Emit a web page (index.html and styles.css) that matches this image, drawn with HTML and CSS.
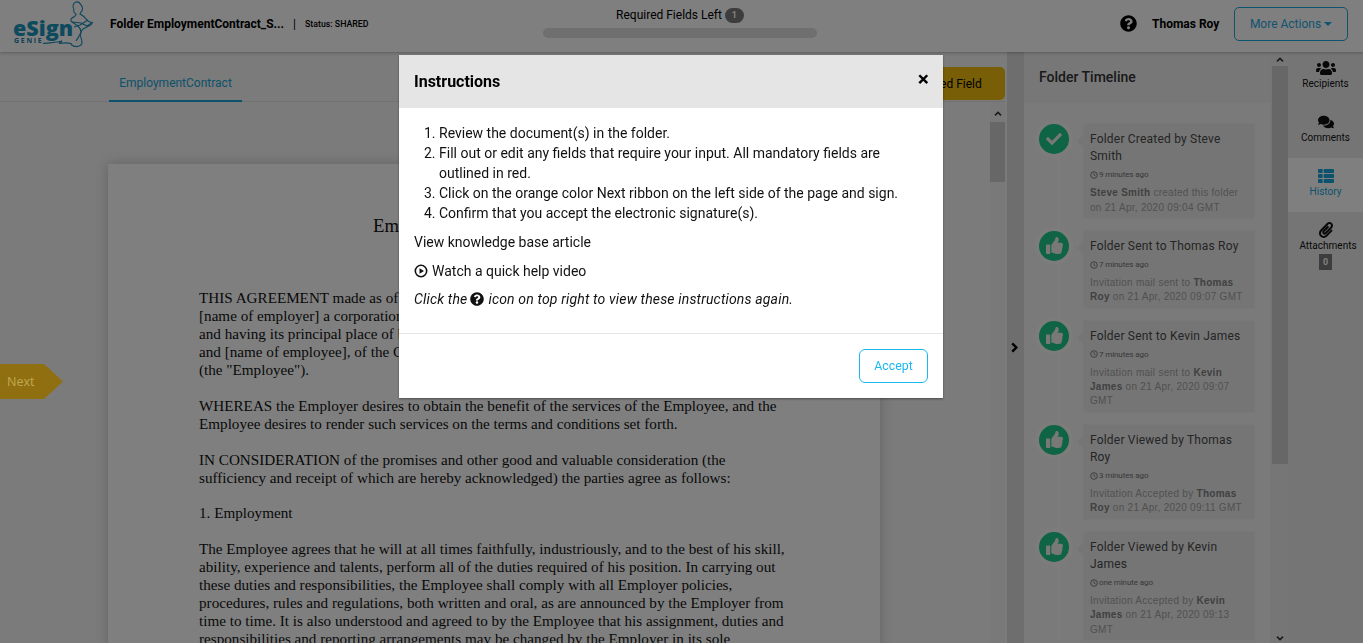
FILE: index.html
```html
<!DOCTYPE html>
<html lang="en">
<head>
<meta charset="utf-8">
<title>Folder EmploymentContract</title>
<link rel="stylesheet" href="styles.css">
</head>
<body>
<svg class="defs" width="0" height="0" aria-hidden="true">
  <symbol id="i-question" viewBox="0 0 512 512"><path d="M504 256c0 136.997-111.043 248-248 248S8 392.997 8 256C8 119.083 119.043 8 256 8s248 111.083 248 248zM262.655 90c-54.497 0-89.255 22.957-116.549 63.758-3.536 5.286-2.353 12.415 2.715 16.258l34.699 26.31c5.205 3.947 12.621 3.008 16.665-2.122 17.864-22.658 30.113-35.797 57.303-35.797 20.429 0 45.698 13.148 45.698 32.958 0 14.976-12.363 22.667-32.534 33.976C247.128 238.528 216 254.941 216 296v4c0 6.627 5.373 12 12 12h56c6.627 0 12-5.373 12-12v-1.333c0-28.462 83.186-29.647 83.186-106.667 0-58.002-60.165-102-116.531-102zM256 338c-25.365 0-46 20.635-46 46 0 25.364 20.635 46 46 46s46-20.636 46-46c0-25.365-20.635-46-46-46z"/></symbol>
  <symbol id="i-thumb" viewBox="0 0 512 512"><path d="M104 224H24c-13.255 0-24 10.745-24 24v240c0 13.255 10.745 24 24 24h80c13.255 0 24-10.745 24-24V248c0-13.255-10.745-24-24-24zM384 81.452c0 42.416-25.97 66.208-33.277 94.548h101.723c33.397 0 59.397 27.746 59.553 58.098.084 17.938-7.546 37.249-19.439 49.197l-.11.11c9.836 23.337 8.237 56.037-9.308 79.469 8.681 25.895-.069 57.704-16.382 74.757 4.298 17.598 2.244 32.575-6.148 44.632C440.202 511.587 389.616 512 346.839 512l-2.845-.001c-48.287-.017-87.806-17.598-119.56-31.725-15.957-7.099-36.821-15.887-52.651-16.178-6.54-.12-11.783-5.457-11.783-11.998v-213.77c0-3.2 1.282-6.271 3.558-8.521 39.614-39.144 56.648-80.587 89.117-113.111 14.804-14.828 20.188-37.227 25.393-58.488C282.515 39.293 291.817 0 312 0c24 0 72 8 72 81.452z"/></symbol>
  <symbol id="i-check" viewBox="0 0 512 512"><path d="M173.898 439.404l-166.4-166.4c-9.997-9.997-9.997-26.206 0-36.204l36.203-36.204c9.997-9.998 26.207-9.998 36.204 0L192 312.69 432.095 72.596c9.997-9.997 26.207-9.997 36.204 0l36.203 36.204c9.997 9.997 9.997 26.206 0 36.204l-294.4 294.401c-9.998 9.997-26.207 9.997-36.204-.001z"/></symbol>
  <symbol id="i-users" viewBox="0 0 640 512"><path d="M96 224c35.3 0 64-28.7 64-64s-28.7-64-64-64-64 28.7-64 64 28.7 64 64 64zm448 0c35.3 0 64-28.7 64-64s-28.7-64-64-64-64 28.7-64 64 28.7 64 64 64zm32 32h-64c-17.6 0-33.5 7.1-45.1 18.6 40.3 22.1 68.9 62 75.1 109.4h66c17.7 0 32-14.3 32-32v-32c0-35.3-28.7-64-64-64zm-256 0c61.9 0 112-50.1 112-112S381.9 32 320 32 208 82.1 208 144s50.1 112 112 112zm76.8 32h-8.3c-20.8 10-43.9 16-68.5 16s-47.6-6-68.5-16h-8.3C179.6 288 128 339.6 128 403.2V432c0 26.5 21.5 48 48 48h288c26.5 0 48-21.5 48-48v-28.8c0-63.6-51.6-115.2-115.2-115.2zm-223.7-13.4C161.5 263.1 145.6 256 128 256H64c-35.3 0-64 28.7-64 64v32c0 17.7 14.3 32 32 32h65.9c6.3-47.4 34.9-87.3 75.2-109.4z"/></symbol>
  <symbol id="i-comments" viewBox="0 0 576 512"><path d="M416 192c0-88.4-93.1-160-208-160S0 103.6 0 192c0 34.3 14.1 65.9 38 92-13.4 30.2-35.5 54.2-35.8 54.5-2.2 2.3-2.8 5.7-1.5 8.7S4.8 352 8 352c36.6 0 66.9-12.3 88.7-25 32.2 15.7 70.3 25 111.3 25 114.9 0 208-71.6 208-160zm122 220c23.9-26 38-57.7 38-92 0-66.9-53.5-124.2-129.3-148.1.9 6.6 1.3 13.3 1.3 20.1 0 105.9-107.7 192-240 192-10.8 0-21.3-.8-31.7-1.9C207.8 439.6 281.8 480 368 480c41 0 79.1-9.2 111.3-25 21.8 12.7 52.1 25 88.7 25 3.2 0 6.1-1.9 7.3-4.8 1.3-2.9.7-6.3-1.5-8.7-.3-.3-22.4-24.2-35.8-54.5z"/></symbol>
  <symbol id="i-list" viewBox="0 0 512 512"><path d="M149.333 216v80c0 13.255-10.745 24-24 24H24c-13.255 0-24-10.745-24-24v-80c0-13.255 10.745-24 24-24h101.333c13.255 0 24 10.745 24 24zM0 376v80c0 13.255 10.745 24 24 24h101.333c13.255 0 24-10.745 24-24v-80c0-13.255-10.745-24-24-24H24c-13.255 0-24 10.745-24 24zM125.333 32H24C10.745 32 0 42.745 0 56v80c0 13.255 10.745 24 24 24h101.333c13.255 0 24-10.745 24-24V56c0-13.255-10.745-24-24-24zm80 448H488c13.255 0 24-10.745 24-24v-80c0-13.255-10.745-24-24-24H205.333c-13.255 0-24 10.745-24 24v80c0 13.255 10.745 24 24 24zm-24-424v80c0 13.255 10.745 24 24 24H488c13.255 0 24-10.745 24-24V56c0-13.255-10.745-24-24-24H205.333c-13.255 0-24 10.745-24 24zm24 264H488c13.255 0 24-10.745 24-24v-80c0-13.255-10.745-24-24-24H205.333c-13.255 0-24 10.745-24 24v80c0 13.255 10.745 24 24 24z"/></symbol>
  <symbol id="i-clip" viewBox="0 0 448 512"><path d="M43.246 466.142c-58.43-60.289-57.341-157.511 1.386-217.581L254.392 34c44.316-45.332 116.351-45.336 160.671 0 43.89 44.894 43.943 117.329 0 162.276L232.214 383.128c-29.855 30.537-78.633 30.111-107.982-.998-28.275-29.97-27.368-77.473 1.452-106.953l143.743-146.835c6.182-6.314 16.312-6.422 22.626-.241l22.861 22.379c6.315 6.182 6.422 16.312.241 22.626L171.427 319.927c-4.932 5.045-5.236 13.428-.648 18.292 4.372 4.634 11.245 4.711 15.688.165l182.849-186.851c19.613-20.062 19.613-52.725-.011-72.798-19.189-19.627-49.957-19.637-69.154 0L90.39 293.295c-34.763 35.560-35.299 93.12-1.191 128.313 34.01 35.093 88.985 35.137 123.058.286l172.06-175.999c6.177-6.319 16.307-6.433 22.626-.256l22.877 22.364c6.319 6.177 6.434 16.307.256 22.626l-172.06 175.998c-59.576 60.938-155.943 60.216-214.77-.485z"/></symbol>
  <symbol id="i-clock" viewBox="0 0 16 16"><circle cx="8" cy="8" r="6.6" fill="none" stroke="currentColor" stroke-width="1.8"/><path d="M8 4v4.4l3 1.4" fill="none" stroke="currentColor" stroke-width="1.6"/></symbol>
  <symbol id="i-play" viewBox="0 0 16 16"><circle cx="8" cy="8" r="6.5" fill="none" stroke="currentColor" stroke-width="1.8"/><path d="M6.3 4.8v6.4L11.4 8z"/></symbol>
  <symbol id="i-up" viewBox="0 0 12 12"><path d="M2 8.5l4-4 4 4" fill="none" stroke="currentColor" stroke-width="2"/></symbol>
  <symbol id="i-down" viewBox="0 0 12 12"><path d="M2 3.5l4 4 4-4" fill="none" stroke="currentColor" stroke-width="2"/></symbol>
  <symbol id="i-right" viewBox="0 0 12 12"><path d="M3.5 1.5L8 6l-4.5 4.5" fill="none" stroke="currentColor" stroke-width="2.6"/></symbol>
</svg>

<div class="app">
  <header class="topbar">
    <div class="logo">
      <span class="logo-word">eSign</span>
      <span class="logo-sub">GENIE</span>
      <svg class="logo-genie" viewBox="0 0 100 52">
        <path d="M43 43.5c6-.5 13-1 19-2.500l-3 2.500c5-1 9-1 13 .5"/>
        <path d="M74 9c-2-2-1-6 2-7 2-.5 4 1 5 3 2 2 2 5 0 7l-1 2c2 1 4 2 5 4l3 3 4 2c0 2-3 3-5 4l-4 2c-2 2-3 6-2 9 1 3 2 5 0 7-3 2-7 2-10-.5"/>
        <path d="M74 9c-1 2 0 4 2 5 0 2-2 3-4 4-1 1-2 3 0 4l6 4c2 2 3 4 3 6-1 3-3 6-5 9"/>
        <path d="M72 22l9 1 6 3 6-4M88 20l-8 5-6 2"/>
      </svg>
    </div>
    <div class="folder-info">
      <span class="folder-name">Folder EmploymentContract_S...</span>
      <span class="folder-sep">|</span>
      <span class="folder-status">Status: SHARED</span>
    </div>
    <div class="progress-block">
      <div class="progress-label">Required Fields Left <span class="count-pill">1</span></div>
      <div class="progress-track"></div>
    </div>
    <div class="top-right">
      <svg class="help-icon"><use href="#i-question"/></svg>
      <span class="user-name">Thomas Roy</span>
      <button class="more-btn">More Actions <span class="caret"></span></button>
    </div>
  </header>

  <main class="workspace">
    <section class="doc-pane">
      <div class="tabs">
        <div class="tab">EmploymentContract</div>
        <button class="required-btn">Next Required Field</button>
      </div>
      <div class="doc-body">
        <div class="doc-canvas">
          <article class="page">
            <h1 class="page-title">Employment Contract</h1>
            <p>THIS AGREEMENT made as of the [day] day of [month], [year], between<br>[name of employer] a corporation incorporated under the laws of the Province of Ontario,<br>and having its principal place of business at [address] (the "Employer");<br>and [name of employee], of the City of [city] in the Province of Ontario<br>(the "Employee").</p>
            <p>WHEREAS the Employer desires to obtain the benefit of the services of the Employee, and the<br>Employee desires to render such services on the terms and conditions set forth.</p>
            <p>IN CONSIDERATION of the promises and other good and valuable consideration (the<br>sufficiency and receipt of which are hereby acknowledged) the parties agree as follows:</p>
            <p>1. Employment</p>
            <p>The Employee agrees that he will at all times faithfully, industriously, and to the best of his skill,<br>ability, experience and talents, perform all of the duties required of his position. In carrying out<br>these duties and responsibilities, the Employee shall comply with all Employer policies,<br>procedures, rules and regulations, both written and oral, as are announced by the Employer from<br>time to time. It is also understood and agreed to by the Employee that his assignment, duties and<br>responsibilities and reporting arrangements may be changed by the Employer in its sole</p>
          </article>
        </div>
        <div class="scrollbar doc-scroll">
          <svg class="scroll-arrow"><use href="#i-up"/></svg>
          <div class="scroll-thumb"></div>
        </div>
      </div>
    </section>

    <div class="strip"><svg class="strip-chevron"><use href="#i-right"/></svg></div>

    <aside class="timeline-pane">
      <h2 class="timeline-head">Folder Timeline</h2>
      <ol class="timeline">
        <li class="event">
          <span class="event-dot"><svg class="dot-check"><use href="#i-check"/></svg></span>
          <div class="event-card">
            <div class="event-title">Folder Created by Steve Smith</div>
            <div class="event-time"><svg class="clock"><use href="#i-clock"/></svg>9 minutes ago</div>
            <div class="event-desc"><b>Steve Smith</b> created this folder on 21 Apr, 2020 09:04 GMT</div>
          </div>
        </li>
        <li class="event">
          <span class="event-dot"><svg class="dot-thumb"><use href="#i-thumb"/></svg></span>
          <div class="event-card">
            <div class="event-title">Folder Sent to Thomas Roy</div>
            <div class="event-time"><svg class="clock"><use href="#i-clock"/></svg>7 minutes ago</div>
            <div class="event-desc">Invitation mail sent to <b>Thomas Roy</b> on 21 Apr, 2020 09:07 GMT</div>
          </div>
        </li>
        <li class="event">
          <span class="event-dot"><svg class="dot-thumb"><use href="#i-thumb"/></svg></span>
          <div class="event-card">
            <div class="event-title">Folder Sent to Kevin James</div>
            <div class="event-time"><svg class="clock"><use href="#i-clock"/></svg>7 minutes ago</div>
            <div class="event-desc">Invitation mail sent to <b>Kevin James</b> on 21 Apr, 2020 09:07 GMT</div>
          </div>
        </li>
        <li class="event">
          <span class="event-dot"><svg class="dot-thumb"><use href="#i-thumb"/></svg></span>
          <div class="event-card">
            <div class="event-title">Folder Viewed by Thomas Roy</div>
            <div class="event-time"><svg class="clock"><use href="#i-clock"/></svg>3 minutes ago</div>
            <div class="event-desc">Invitation Accepted by <b>Thomas Roy</b> on 21 Apr, 2020 09:11 GMT</div>
          </div>
        </li>
        <li class="event">
          <span class="event-dot"><svg class="dot-thumb"><use href="#i-thumb"/></svg></span>
          <div class="event-card">
            <div class="event-title">Folder Viewed by Kevin James</div>
            <div class="event-time"><svg class="clock"><use href="#i-clock"/></svg>one minute ago</div>
            <div class="event-desc">Invitation Accepted by <b>Kevin James</b> on 21 Apr, 2020 09:13 GMT</div>
          </div>
        </li>
      </ol>
    </aside>

    <div class="scrollbar side-scroll">
      <svg class="scroll-arrow"><use href="#i-up"/></svg>
      <div class="scroll-thumb"></div>
      <svg class="scroll-arrow scroll-arrow-end"><use href="#i-down"/></svg>
    </div>

    <nav class="sidenav">
      <div class="side-item side-first"><svg class="side-icon side-users"><use href="#i-users"/></svg><span>Recipients</span></div>
      <div class="side-item"><svg class="side-icon"><use href="#i-comments"/></svg><span>Comments</span></div>
      <div class="side-item side-active"><svg class="side-icon"><use href="#i-list"/></svg><span>History</span></div>
      <div class="side-item"><svg class="side-icon"><use href="#i-clip"/></svg><span class="side-attach">Attachments</span><span class="side-badge">0</span></div>
    </nav>
  </main>
</div>

<div class="backdrop"></div>

<div class="next-ribbon">Next</div>

<div class="modal">
  <div class="modal-head">
    <h3 class="modal-title">Instructions</h3>
    <span class="modal-close">&times;</span>
  </div>
  <div class="modal-body">
    <ol class="steps">
      <li>Review the document(s) in the folder.</li>
      <li>Fill out or edit any fields that require your input. All mandatory fields are outlined in red.</li>
      <li>Click on the orange color Next ribbon on the left side of the page and sign.</li>
      <li>Confirm that you accept the electronic signature(s).</li>
    </ol>
    <p class="modal-line">View knowledge base article</p>
    <p class="modal-line modal-video"><svg class="play-icon"><use href="#i-play"/></svg>Watch a quick help video</p>
    <p class="modal-line modal-note"><span>Click the</span><svg class="note-icon"><use href="#i-question"/></svg><span class="note-rest">icon on top right to view these instructions again.</span></p>
  </div>
  <div class="modal-foot">
    <button class="accept-btn">Accept</button>
  </div>
</div>
</body>
</html>
```

FILE: styles.css
```css
* { box-sizing: border-box; }
html, body { margin: 0; height: 100%; overflow: hidden; }
body { font-family: Roboto, "Liberation Sans", sans-serif; color: #000; background: #fff; }
.defs { position: absolute; }
svg { fill: currentColor; display: block; }

.app { display: flex; flex-direction: column; height: 100vh; }

/* top bar */
.topbar { height: 52px; flex: none; display: flex; align-items: center; background: #fff; box-shadow: 0 1px 3px rgba(0,0,0,.25); position: relative; z-index: 2; }
.logo { width: 110px; height: 52px; flex: none; position: relative; color: #1a94bc; }
.logo-word { position: absolute; left: 13px; top: 14px; font: 800 21.5px/28px "Open Sans", sans-serif; }
.logo-sub { position: absolute; left: 14px; top: 37px; font: 700 7px/8px "Open Sans", sans-serif; letter-spacing: 1.7px; color: #1b7ea5; }
.logo-genie { position: absolute; left: 0; top: 0; width: 100px; height: 52px; fill: none; stroke: #1f8cb8; stroke-width: 1.1; }
.folder-info { width: 433px; flex: none; display: flex; align-items: center; margin-top: -5px; }
.folder-name { font-weight: 700; font-size: 12px; width: 183px; white-space: nowrap; }
.folder-sep { font-size: 12px; width: 12px; }
.folder-status { font-size: 8.8px; font-weight: 500; white-space: nowrap; }
.progress-block { width: 274px; flex: none; display: flex; flex-direction: column; align-items: center; margin-top: -8px; }
.progress-label { font-size: 12px; line-height: 18px; display: flex; align-items: center; gap: 3px; height: 18px; }
.count-pill { width: 19px; height: 15px; border-radius: 8px; background: #7a7a7a; color: #fff; font-size: 9px; font-weight: 700; display: flex; align-items: center; justify-content: center; }
.progress-track { width: 274px; height: 10px; margin-top: 4px; border-radius: 5px; background: #dedede; }
.top-right { flex: 1; display: flex; align-items: center; justify-content: flex-end; padding-right: 15px; margin-top: -5px; }
.help-icon { width: 17px; height: 17px; margin-right: 15px; }
.user-name { font-size: 12px; font-weight: 700; width: 82px; }
.more-btn { width: 114px; height: 34px; border: 1px solid #18a8e0; border-radius: 5px; background: transparent; color: #1fa8e0; font: 400 12px Roboto, sans-serif; padding: 0; display: flex; align-items: center; justify-content: center; gap: 3px; }
.caret { width: 0; height: 0; border: 4px solid transparent; border-top-color: currentColor; border-bottom: 0; }

/* workspace */
.workspace { flex: 1; min-height: 0; display: flex; overflow: hidden; }
.doc-pane { width: 1007px; flex: none; display: flex; flex-direction: column; background: #f6f6f6; padding-right: 2px; }
.tabs { height: 50px; flex: none; display: flex; justify-content: space-between; align-items: flex-end; padding-left: 109px; border-bottom: 1px solid #e2e2e2; }
.tab { width: 133px; height: 50px; padding-top: 23px; text-align: center; font-size: 12px; line-height: 16px; color: #18a4d8; border-bottom: 2px solid #18a4d8; margin-bottom: -1px; }
.required-btn { width: 170px; height: 33px; background: #f0bc0d; border: 0; border-radius: 5px; font: 400 12px/15px Roboto, sans-serif; color: #000; padding: 1px 0 0 20px; margin-bottom: 1px; }
.doc-body { flex: 1; min-height: 0; display: flex; }
.doc-canvas { flex: 1; overflow: hidden; padding: 62px 0 0 108px; }
.page { width: 772px; height: 700px; background: #fff; padding: 50px 0 0 91px; box-shadow: 0 0 12px rgba(0,0,0,.2); font: 15.17px/17.95px "Liberation Serif", serif; white-space: nowrap; color: #111; }
.page-title { font: 400 18.7px/24px "Liberation Serif", serif; margin: 0 0 51px; padding-left: 174px; }
.page p { margin: 0 0 17.95px; }
.scrollbar { flex: none; display: flex; flex-direction: column; }
.doc-scroll { width: 15px; padding-top: 7px; background: #f3f3f3; }
.scroll-arrow { width: 12px; height: 9px; margin: 0 auto; color: #333; flex: none; }
.scroll-thumb { background: #cfcfcf; }
.doc-scroll .scroll-thumb { height: 60px; margin-top: 4px; }

.next-ribbon { position: fixed; left: 0; top: 364px; width: 63px; height: 35px; z-index: 11; background: #8f6f10; clip-path: polygon(0 0, 44px 0, 100% 50%, 44px 100%, 0 100%); color: #c4a850; font: 400 12.5px/35px "Open Sans", sans-serif; padding-left: 7px; }

.strip { width: 17px; flex: none; background: #dcdcdc; display: flex; align-items: center; justify-content: center; padding: 0 2px 1px 0; }
.strip-chevron { width: 11px; height: 11px; }

/* timeline */
.timeline-pane { width: 246px; flex: none; background: #f4f4f4; display: flex; flex-direction: column; overflow: hidden; }
.timeline-head { margin: 0; height: 51px; flex: none; padding: 16px 0 0 15px; background: #efefef; font: 500 14px/18px Roboto, sans-serif; color: #333; }
.timeline { list-style: none; margin: 0; padding: 21px 16px 0 15px; position: relative; }
.timeline::before { content: ""; position: absolute; left: 33px; top: 40px; bottom: 0; width: 3px; background: #f9f9f9; }
.event { display: flex; gap: 15px; margin-bottom: 13px; position: relative; }
.event-dot { width: 30px; height: 30px; flex: none; border-radius: 50%; background: #1cc88a; color: #f0f0f0; box-shadow: 0 0 0 4px #f9f9f9; display: flex; align-items: center; justify-content: center; }
.dot-check { width: 16px; height: 16px; }
.dot-thumb { width: 17px; height: 17px; }
.event-card { flex: 1; min-width: 0; background: #ebebeb; padding: 7px 6px 3.2px; position: relative; box-shadow: 0 0 3px rgba(0,0,0,.05); }
.event-card::before { content: ""; position: absolute; left: -7px; top: 10px; border: 7px solid transparent; border-left: 0; border-right-color: #ebebeb; }
.event-title { font-size: 12px; line-height: 1.428; letter-spacing: .2px; color: #4a4a4a; }
.event-time { margin-top: 2.5px; height: 14px; display: flex; align-items: center; gap: 1px; font-size: 8px; letter-spacing: -.1px; color: #707070; }
.clock { width: 8px; height: 8px; }
.event-desc { margin-top: 4.5px; font-family: "Liberation Sans", sans-serif; font-size: 10px; line-height: 1.428; letter-spacing: .28px; color: #a2a2a2; }
.event-desc b { color: #828282; font-weight: 700; }

.side-scroll { width: 18px; padding: 1px 0 0 2px; background: #ededed; }
.side-scroll .scroll-arrow:first-child { margin-top: 2px; }
.side-scroll .scroll-thumb { width: 16px; height: 398px; margin-top: 2px; }
.side-scroll .scroll-arrow-end { margin-top: auto; }

/* side nav */
.sidenav { flex: 1; background: #ebebeb; }
.side-item { height: 54px; padding-top: 10px; display: flex; flex-direction: column; align-items: center; font-size: 10px; line-height: 12px; color: #111; }
.side-item > * { flex: none; }
.side-first { height: 52px; padding-top: 8px; }
.side-icon { width: 16px; height: 16px; margin-bottom: 2px; }
.side-users { width: 20px; }
.side-active { background: #fff; color: #18a4d8; }
.side-attach { margin-left: 5px; }
.side-badge { width: 13px; height: 16px; margin-top: 2px; background: #7a7a7a; color: #fff; font-size: 9px; font-weight: 700; line-height: 16px; text-align: center; }

/* modal */
.backdrop { position: fixed; inset: 0; background: rgba(0,0,0,.5); z-index: 10; }
.modal { position: fixed; left: 399px; top: 55px; width: 544px; height: 343px; background: #fff; z-index: 11; display: flex; flex-direction: column; color: #111; box-shadow: 0 1px 2px rgba(0,0,0,.4); }
.modal-head { height: 53px; flex: none; background: #e5e5e5; display: flex; justify-content: space-between; align-items: center; padding: 0 14px 0 15px; }
.modal-title { margin: 0; font: 700 16px/20px Roboto, sans-serif; color: #000; }
.modal-close { font: 700 21px/20px Roboto, sans-serif; color: #000; margin-top: -5px; }
.modal-body { height: 226px; flex: none; padding: 15px 15px 0; font-size: 14px; line-height: 20px; border-bottom: 1px solid #e5e5e5; }
.steps { margin: 0 0 9px; padding-left: 25px; }
.modal-line { margin: 0 0 9px; }
.modal-video { display: flex; align-items: center; gap: 4px; }
.play-icon { width: 14px; height: 14px; }
.modal-note { font-style: italic; display: flex; align-items: center; white-space: nowrap; margin-top: -1px; letter-spacing: .16px; }
.note-icon { width: 14px; height: 14px; margin: 0 4px 0 3px; }
.modal-foot { flex: 1; display: flex; justify-content: flex-end; align-items: flex-start; padding: 15px 15px 0; }
.accept-btn { width: 69px; height: 34px; background: #fff; border: 1px solid #1ab8f0; border-radius: 6px; color: #1ab8f0; font: 400 12.3px Roboto, sans-serif; padding: 0; }
```
